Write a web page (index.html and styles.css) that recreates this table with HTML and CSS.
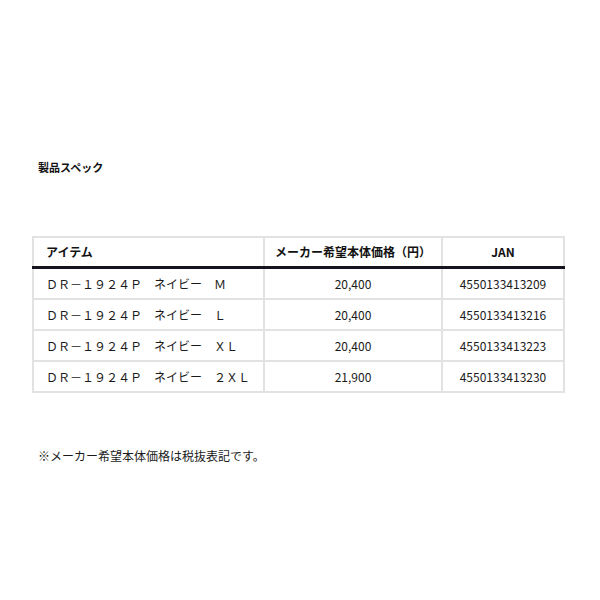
FILE: index.html
```html
<!DOCTYPE html>
<html lang="ja">
<head>
<meta charset="utf-8">
<title>製品スペック</title>
<link rel="stylesheet" href="styles.css">
</head>
<body>
<div class="page">
  <h2 class="title">製品スペック</h2>
  <table class="spec">
    <colgroup>
      <col class="w-item">
      <col class="w-price">
      <col class="w-jan">
    </colgroup>
    <thead>
      <tr>
        <th class="c-item">アイテム</th>
        <th class="c-price">メーカー希望本体価格（円）</th>
        <th class="c-jan">JAN</th>
      </tr>
    </thead>
    <tbody>
      <tr>
        <td class="c-item">ＤＲ－１９２４Ｐ　ネイビー　Ｍ</td>
        <td class="c-price">20,400</td>
        <td class="c-jan">4550133413209</td>
      </tr>
      <tr>
        <td class="c-item">ＤＲ－１９２４Ｐ　ネイビー　Ｌ</td>
        <td class="c-price">20,400</td>
        <td class="c-jan">4550133413216</td>
      </tr>
      <tr>
        <td class="c-item">ＤＲ－１９２４Ｐ　ネイビー　ＸＬ</td>
        <td class="c-price">20,400</td>
        <td class="c-jan">4550133413223</td>
      </tr>
      <tr>
        <td class="c-item">ＤＲ－１９２４Ｐ　ネイビー　２ＸＬ</td>
        <td class="c-price">21,900</td>
        <td class="c-jan">4550133413230</td>
      </tr>
    </tbody>
  </table>
  <p class="note">※メーカー希望本体価格は税抜表記です。</p>
</div>
</body>
</html>
```
FILE: styles.css
```css
html, body {
  margin: 0;
  padding: 0;
  background: #ffffff;
}
body {
  font-family: "Noto Sans CJK JP", "Noto Sans", sans-serif;
  font-size: 12px;
  color: #1a1a1a;
}
.page {
  padding: 158px 36px 0 32px;
}
.title {
  margin: 0;
  padding-left: 6px;
  font-size: 11px;
  line-height: 18px;
  font-weight: bold;
  color: #111111;
}
.spec {
  margin-top: 60px;
  width: 531px;
  border-collapse: collapse;
  table-layout: fixed;
}
.w-item { width: 231px; }
.w-price { width: 178px; }
.w-jan { width: 122px; }
.spec th,
.spec td {
  border: 2px solid #e2e2e2;
  padding: 0 4px;
  line-height: 18px;
  white-space: nowrap;
}
.spec th {
  height: 28px;
  font-weight: bold;
  color: #111111;
  border-bottom: 3px solid #14141e;
}
.spec td {
  height: 29px;
  color: #1a1a1a;
}
.spec .c-item {
  text-align: left;
  padding-left: 12px;
}
.spec .c-price,
.spec .c-jan {
  text-align: center;
}
.note {
  margin: 54px 0 0 0;
  padding-left: 6px;
  line-height: 18px;
  color: #1a1a1a;
}
```
